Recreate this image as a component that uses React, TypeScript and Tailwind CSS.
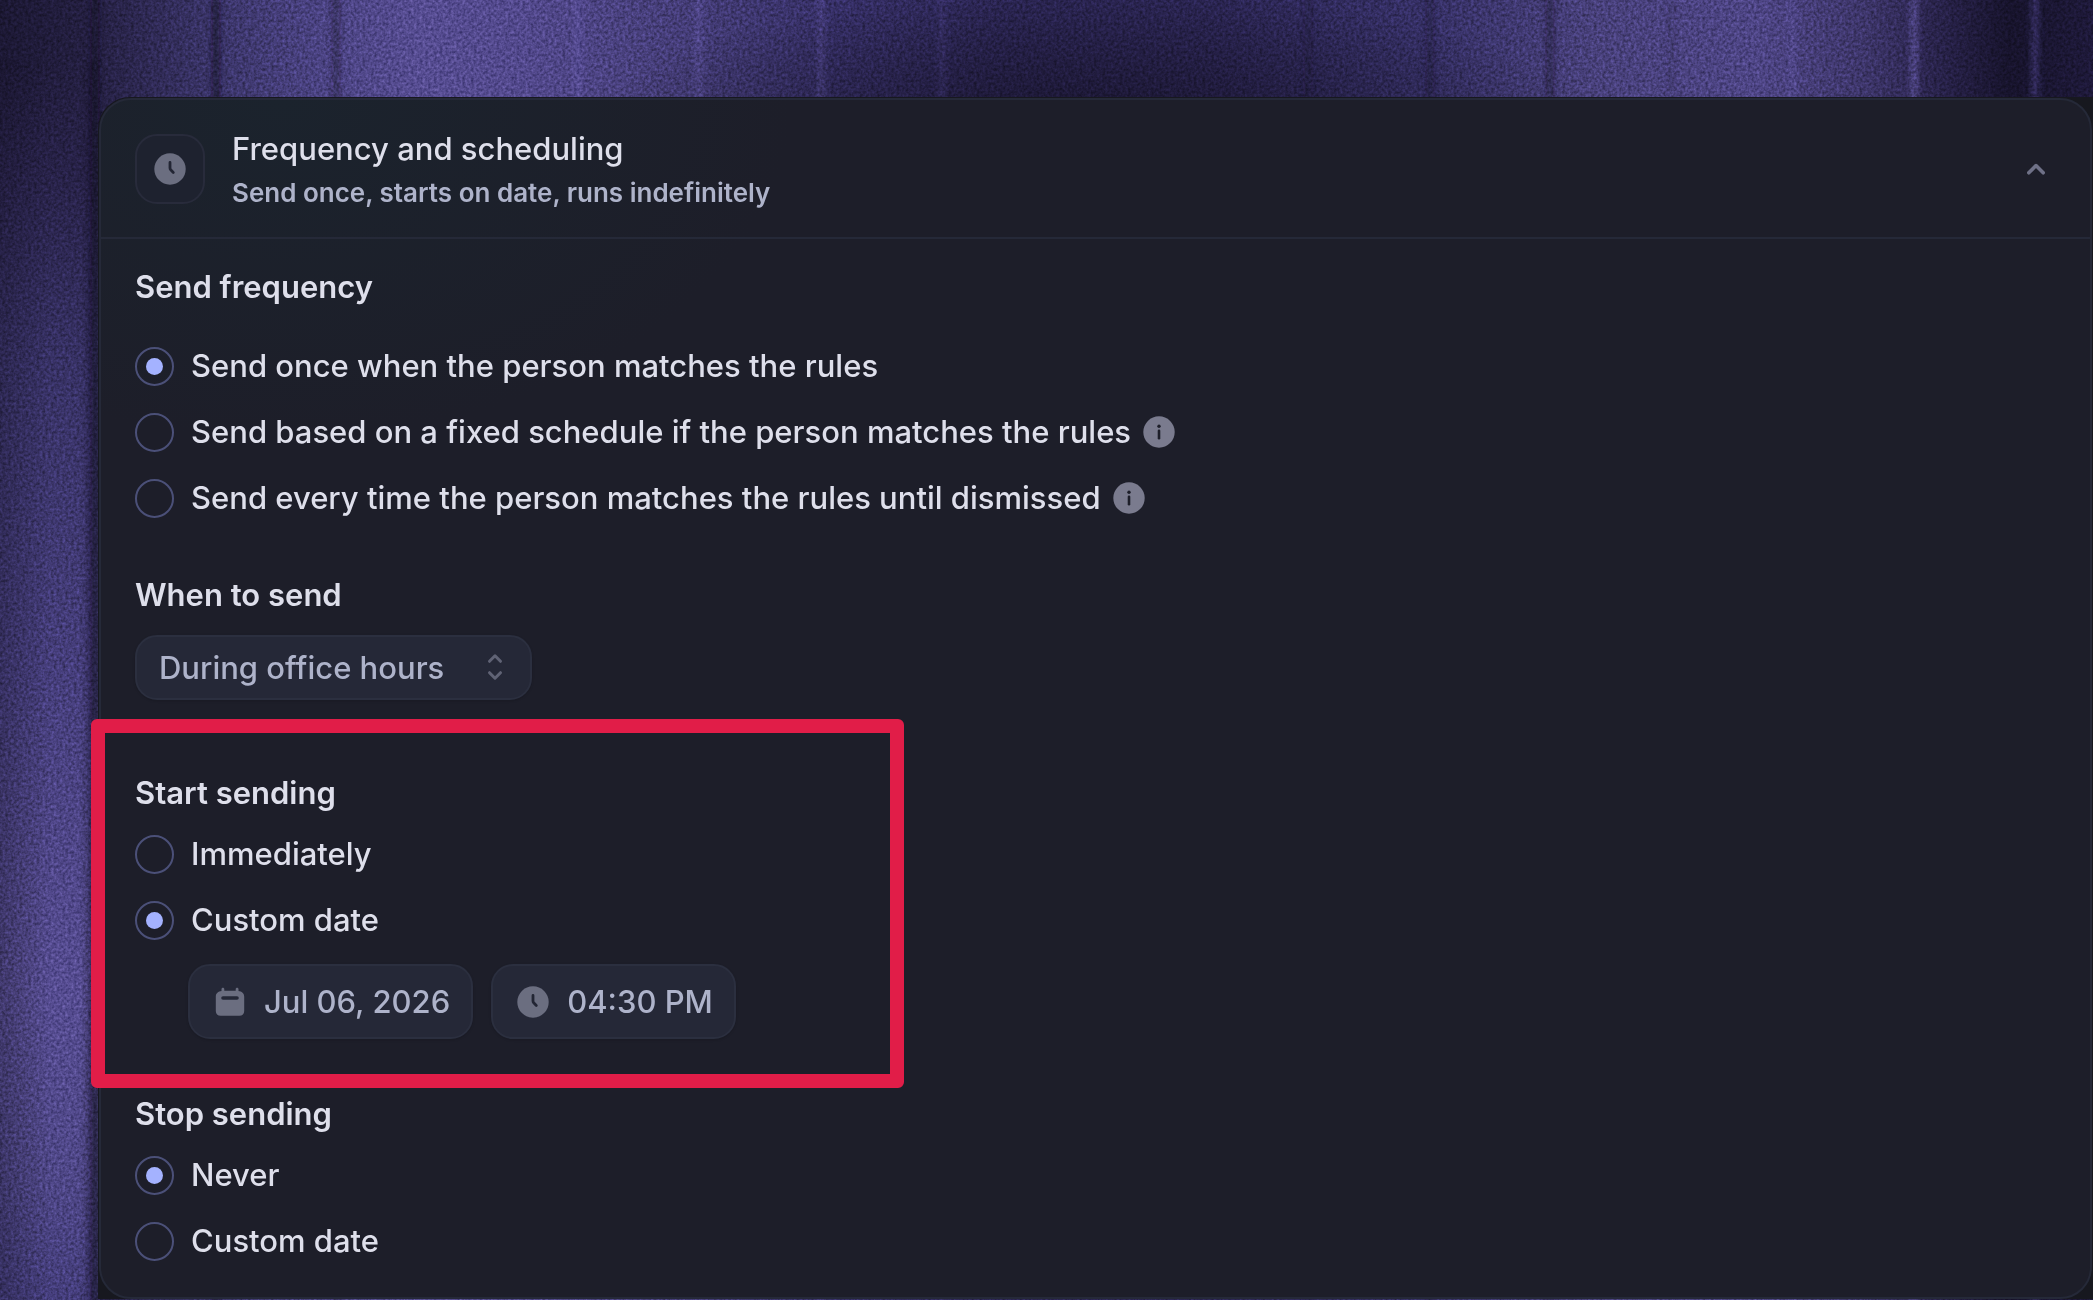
import { useState } from "react";

interface RadioRowProps {
  name: string;
  label: string;
  checked: boolean;
  onSelect: () => void;
  info?: boolean;
}

const lines = [
  { x: 95, color: "#120f24", opacity: 0.6 },
  { x: 216, color: "#120f24", opacity: 0.75 },
  { x: 336, color: "#120f24", opacity: 0.45 },
  { x: 578, color: "#7468c0", opacity: 0.35 },
  { x: 699, color: "#7468c0", opacity: 0.35 },
  { x: 821, color: "#7468c0", opacity: 0.3 },
  { x: 942, color: "#5a4fa0", opacity: 0.25 },
  { x: 1308, color: "#120f24", opacity: 0.25 },
  { x: 1430, color: "#120f24", opacity: 0.4 },
  { x: 1550, color: "#120f24", opacity: 0.5 },
  { x: 1671, color: "#120f24", opacity: 0.15 },
  { x: 1792, color: "#7468c0", opacity: 0.3 },
  { x: 1914, color: "#7468c0", opacity: 0.6 },
  { x: 2035, color: "#5f52ab", opacity: 0.5 },
];

function Backdrop() {
  return (
    <svg
      className="absolute inset-0 h-full w-full"
      viewBox="0 0 2093 1300"
      preserveAspectRatio="none"
      aria-hidden="true"
    >
      <defs>
        <linearGradient id="across" x1="0" x2="1" y1="0" y2="0">
          <stop offset="0" stopColor="#1d1936" />
          <stop offset="0.045" stopColor="#262145" />
          <stop offset="0.1" stopColor="#3c366c" />
          <stop offset="0.15" stopColor="#4d4586" />
          <stop offset="0.2" stopColor="#5a5096" />
          <stop offset="0.25" stopColor="#564c91" />
          <stop offset="0.33" stopColor="#473f7c" />
          <stop offset="0.4" stopColor="#38316a" />
          <stop offset="0.48" stopColor="#2d2757" />
          <stop offset="0.58" stopColor="#2d2757" />
          <stop offset="0.68" stopColor="#38326a" />
          <stop offset="0.76" stopColor="#4b4380" />
          <stop offset="0.84" stopColor="#51488a" />
          <stop offset="0.89" stopColor="#40386f" />
          <stop offset="0.93" stopColor="#28224a" />
          <stop offset="0.96" stopColor="#18142e" />
          <stop offset="1" stopColor="#1f1a3c" />
        </linearGradient>
        <radialGradient id="shade">
          <stop offset="0" stopColor="#17132b" stopOpacity="0.8" />
          <stop offset="1" stopColor="#17132b" stopOpacity="0" />
        </radialGradient>
        <linearGradient id="down" x1="0" x2="0" y1="0" y2="1">
          <stop offset="0" stopColor="#29234b" stopOpacity="0" />
          <stop offset="0.09" stopColor="#29234b" />
          <stop offset="0.25" stopColor="#3a346a" />
          <stop offset="0.5" stopColor="#494181" />
          <stop offset="0.75" stopColor="#5a5096" />
          <stop offset="0.9" stopColor="#524a8c" />
          <stop offset="1" stopColor="#474080" />
        </linearGradient>
        <linearGradient id="edge" x1="0" x2="1" y1="0" y2="0">
          <stop offset="0" stopColor="#17132b" stopOpacity="0.35" />
          <stop offset="0.5" stopColor="#17132b" stopOpacity="0" />
          <stop offset="0.8" stopColor="#17132b" stopOpacity="0" />
          <stop offset="0.94" stopColor="#17132b" stopOpacity="0.4" />
          <stop offset="1" stopColor="#17132b" stopOpacity="0.25" />
        </linearGradient>
        <filter id="soft" x="-300%" width="700%">
          <feGaussianBlur stdDeviation="3 0" />
        </filter>
        <filter id="grain" x="0" y="0" width="100%" height="100%" colorInterpolationFilters="sRGB">
          <feTurbulence type="fractalNoise" baseFrequency="0.35" numOctaves="2" seed="4" />
          <feColorMatrix values="0.8 0 0 0 0.06  0.8 0 0 0 0.06  0.8 0 0 0 0.06  0 0 0 0 1" />
        </filter>
      </defs>
      <rect width="2093" height="1300" fill="url(#across)" />
      <ellipse cx="1090" cy="120" rx="500" ry="130" fill="url(#shade)" />
      <rect y="60" width="100" height="1240" fill="url(#down)" />
      <rect y="60" width="100" height="1240" fill="url(#edge)" />
      {lines.map((line) => (
        <rect
          key={line.x}
          x={line.x - 3}
          y="-10"
          width="6"
          height="1320"
          fill={line.color}
          opacity={line.opacity}
          filter="url(#soft)"
        />
      ))}
      <rect width="2093" height="1300" filter="url(#grain)" className="mix-blend-overlay" opacity="0.6" />
    </svg>
  );
}

function ClockIcon() {
  return (
    <svg viewBox="0 0 32 32" className="size-8 shrink-0" aria-hidden="true">
      <circle cx="16" cy="16" r="15.7" fill="#6b6e80" />
      <path d="M16 9.5v5.6c0 .7.2 1.2.7 1.7l2.6 2.6" fill="none" stroke="#222533" strokeWidth="2.8" strokeLinecap="round" />
    </svg>
  );
}

function CalendarIcon() {
  return (
    <svg viewBox="0 0 32 32" className="size-8 shrink-0" aria-hidden="true">
      <path
        d="M8.9 1.8c.8 0 1.4.6 1.4 1.4v1.6h11.4V3.2c0-.8.6-1.4 1.4-1.4s1.4.6 1.4 1.4v1.7c3.2.3 5.7 2.2 5.7 5.6v14.4c0 3-1.8 4.9-4.9 4.9H6.7c-3.1 0-4.9-1.9-4.9-4.9V10.5c0-3.4 2.5-5.3 5.7-5.6V3.2c0-.8.6-1.4 1.4-1.4z"
        fill="#6b6e80"
      />
      <path d="M9 12h14" stroke="#252837" strokeWidth="3.6" strokeLinecap="round" />
    </svg>
  );
}

function InfoIcon() {
  return (
    <svg viewBox="0 0 32 32" className="size-8" aria-hidden="true">
      <circle cx="16" cy="16" r="15.7" fill="#7a7b8e" />
      <circle cx="16" cy="10.2" r="1.7" fill="#1d1e29" />
      <path d="M16 14.8v7.4" stroke="#1d1e29" strokeWidth="2.6" strokeLinecap="round" />
    </svg>
  );
}

function RadioRow({ name, label, checked, onSelect, info }: RadioRowProps) {
  return (
    <div className="flex items-center gap-3">
      <label className="flex items-center gap-[17px]">
        <input
          type="radio"
          name={name}
          checked={checked}
          onChange={onSelect}
          className="grid size-[39px] shrink-0 appearance-none place-items-center rounded-full border-2 border-[#4b5078] before:size-[17px] before:rounded-full checked:before:bg-[#a4b2ff]"
        />
        <span>{label}</span>
      </label>
      {info && (
        <button type="button" aria-label="More info">
          <InfoIcon />
        </button>
      )}
    </div>
  );
}

const frequencies = [
  { label: "Send once when the person matches the rules" },
  { label: "Send based on a fixed schedule if the person matches the rules", info: true },
  { label: "Send every time the person matches the rules until dismissed", info: true },
];

export default function App() {
  const [open, setOpen] = useState(true);
  const [frequency, setFrequency] = useState(0);
  const [start, setStart] = useState("Custom date");
  const [stop, setStop] = useState("Never");

  return (
    <div className="relative min-h-screen overflow-hidden bg-[#2d2757] font-['Inter',sans-serif] text-[31px] leading-10 font-medium text-[#dedfeb]">
      <Backdrop />
      <main className="relative pt-[97px] pl-[98px]">
        <div className="rounded-tl-[32px] bg-[#17181f] pt-px pr-px pl-px">
          <section className="rounded-[32px] border-2 border-[#252938] bg-[#1d1e29] bg-radial-[at_9%_0%] from-[#1b232d] to-[#1d1e29] to-20%">
            <header className="flex items-center gap-[27px] border-b-2 border-[#252938] pt-[29px] pr-[45px] pb-7 pl-[34px]">
              <span className="flex size-[70px] shrink-0 items-center justify-center rounded-[22px] border-2 border-[#282b3b] bg-[#1e222f]">
                <ClockIcon />
              </span>
              <div className="flex flex-1 flex-col gap-2">
                <h1>Frequency and scheduling</h1>
                <p className="text-[26px] leading-8 font-[560] text-[#aeb3ca]">Send once, starts on date, runs indefinitely</p>
              </div>
              <button type="button" aria-label="Toggle section" aria-expanded={open} onClick={() => setOpen(!open)}>
                <svg viewBox="0 0 18 12" className="h-3 w-[18px]" aria-hidden="true">
                  <path d="M1.8 9.8 9 2.6l7.2 7.2" fill="none" stroke="#6f7187" strokeWidth="3.6" strokeLinecap="round" strokeLinejoin="round" />
                </svg>
              </button>
            </header>

            {open && (
              <div className="px-[34px] pt-7 pb-9">
                <fieldset>
                  <legend className="font-semibold">Send frequency</legend>
                  <div className="mt-[39px] flex flex-col gap-[26px]">
                    {frequencies.map((item, i) => (
                      <RadioRow
                        key={item.label}
                        name="frequency"
                        label={item.label}
                        info={item.info}
                        checked={frequency === i}
                        onSelect={() => setFrequency(i)}
                      />
                    ))}
                  </div>
                </fieldset>

                <div className="mt-[57px] flex flex-col items-start gap-5">
                  <label htmlFor="when" className="font-semibold">
                    When to send
                  </label>
                  <div className="relative">
                    <select
                      id="when"
                      className="h-[65px] w-[397px] appearance-none rounded-[22px] border-2 border-[#2b2f3f] bg-[#252837] pl-[22px] text-[#aeb3ca] shadow-sm"
                    >
                      <option>During office hours</option>
                      <option>Any time</option>
                    </select>
                    <svg viewBox="0 0 16 28" className="pointer-events-none absolute top-[18px] right-[29px] h-7 w-4" aria-hidden="true">
                      <path d="M2.5 8.3 8 2.8l5.5 5.5M2.5 19.7 8 25.2l5.5-5.5" fill="none" stroke="#606375" strokeWidth="3" strokeLinecap="round" strokeLinejoin="round" />
                    </svg>
                  </div>
                </div>

                <div className="relative mt-[73px]">
                  <fieldset>
                    <legend className="font-semibold">Start sending</legend>
                    <div className="mt-[21px] flex flex-col gap-[26px]">
                      {["Immediately", "Custom date"].map((label) => (
                        <RadioRow key={label} name="start" label={label} checked={start === label} onSelect={() => setStart(label)} />
                      ))}
                    </div>
                    <div className="mt-6 ml-[53px] flex gap-[18px] text-[#aeb3ca]">
                      <button type="button" className="flex h-[75px] items-center gap-[18px] rounded-[22px] border-2 border-[#2b2f3f] bg-[#252837] pr-[21px] pl-6 shadow-sm">
                        <CalendarIcon />
                        Jul 06, 2026
                      </button>
                      <button type="button" className="flex h-[75px] items-center gap-[18px] rounded-[22px] border-2 border-[#2b2f3f] bg-[#252837] pr-[21px] pl-6 shadow-sm">
                        <ClockIcon />
                        04:30 PM
                      </button>
                    </div>
                  </fieldset>
                  {/* highlight frame */}
                  <div className="pointer-events-none absolute -top-[54px] -bottom-[49px] -left-[44px] w-[813px] rounded-md border-14 border-[#e11d48]" />
                </div>

                <fieldset className="mt-[55px]">
                  <legend className="font-semibold">Stop sending</legend>
                  <div className="mt-[21px] flex flex-col gap-[26px]">
                    {["Never", "Custom date"].map((label) => (
                      <RadioRow key={label} name="stop" label={label} checked={stop === label} onSelect={() => setStop(label)} />
                    ))}
                  </div>
                </fieldset>
              </div>
            )}
          </section>
        </div>
      </main>
    </div>
  );
}
